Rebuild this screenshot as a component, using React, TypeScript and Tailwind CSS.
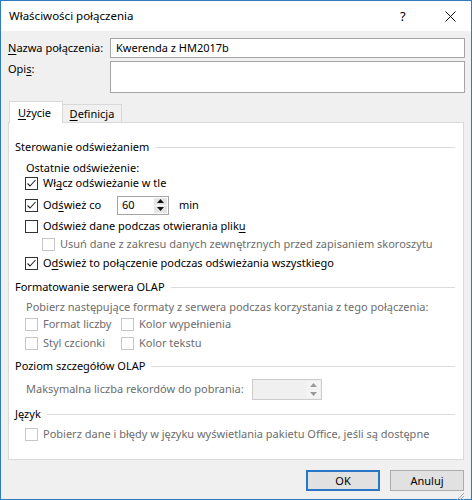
import type { ReactNode } from "react";

const U = ({ children }: { children: ReactNode }) => (
  <span className="underline underline-offset-2 decoration-1">{children}</span>
);

const Check = ({ checked = false, disabled = false }: { checked?: boolean; disabled?: boolean }) => (
  <span
    className={
      "flex h-[13px] w-[13px] shrink-0 items-center justify-center border bg-white " +
      (disabled ? "border-[#c6c6c6]" : "border-[#333]")
    }
  >
    {checked && (
      <svg width="11" height="11" viewBox="0 0 11 11">
        <polyline points="1.5,5.5 4,8 9.5,2" fill="none" stroke="#222" strokeWidth="1.1" />
      </svg>
    )}
  </span>
);

const Row = ({ mt, className = "", children }: { mt: string; className?: string; children: ReactNode }) => (
  <div className={"flex h-[14px] items-center whitespace-nowrap " + mt + " " + className}>{children}</div>
);

const Section = ({ mt, title }: { mt: string; title: string }) => (
  <Row mt={mt} className="ml-[6px] mr-[8px] gap-[6px]">
    <span>{title}</span>
    <span className="h-px flex-1 bg-[#dcdcdc]" />
  </Row>
);

const Arrows = ({ disabled = false }: { disabled?: boolean }) => (
  <span className="flex h-full w-[14px] flex-col gap-px py-px pr-px">
    <span className={"flex flex-1 items-center justify-center " + (disabled ? "bg-[#f4f4f4]" : "bg-[#e5e5e5]")}>
      <svg width="7" height="4" viewBox="0 0 7 4">
        <polygon points="0,4 7,4 3.5,0" fill={disabled ? "#9a9a9a" : "#111"} />
      </svg>
    </span>
    <span className={"flex flex-1 items-center justify-center " + (disabled ? "bg-[#f4f4f4]" : "bg-[#e5e5e5]")}>
      <svg width="7" height="4" viewBox="0 0 7 4">
        <polygon points="0,0 7,0 3.5,4" fill={disabled ? "#9a9a9a" : "#111"} />
      </svg>
    </span>
  </span>
);

export default function App() {
  return (
    <div className="flex h-[500px] w-[472px] flex-col whitespace-nowrap border border-[#2f7bbf] bg-[#f0f0f0] font-['Noto_Sans',sans-serif] text-[11px] leading-[16px] text-black">
      {/* title bar */}
      <div className="flex h-[30px] shrink-0 items-center bg-white pl-[8px] text-[11.5px]">
        <span className="flex-1">Właściwości połączenia</span>
        <span className="w-[14px] text-[13px]">?</span>
        <span className="ml-[30px] mr-[15px] flex w-[12px] justify-center">
          <svg width="11" height="11" viewBox="0 0 11 11">
            <path d="M0.5 0.5L10.5 10.5M10.5 0.5L0.5 10.5" stroke="#111" strokeWidth="1" />
          </svg>
        </span>
      </div>

      <div className="flex flex-1 flex-col pl-[7px] pr-[6px]">
        <div className="mt-[7px] flex h-[20px] items-center">
          <span className="w-[102px] shrink-0">
            <U>N</U>azwa połączenia:
          </span>
          <div className="flex h-full flex-1 items-center border border-[#a5a5a5] bg-white pl-[5px]">
            Kwerenda z HM2017b
          </div>
        </div>
        <div className="mt-[3px] flex h-[32px]">
          <span className="w-[102px] shrink-0">
            Opi<U>s</U>:
          </span>
          <div className="h-full flex-1 border border-[#a5a5a5] bg-white" />
        </div>

        {/* tabs */}
        <div className="mt-[8px] flex h-[21px] items-end pl-px">
          <div className="relative z-10 -mb-px flex h-[22px] w-[54px] items-center justify-center border border-b-0 border-[#d9d9d9] bg-white pr-[3px]">
            <span>
              <U>U</U>życie
            </span>
          </div>
          <div className="flex h-[18px] w-[59px] items-center justify-center border border-b-0 border-l-0 border-[#d9d9d9] bg-[#f0f0f0]">
            <span>
              <U>D</U>efinicja
            </span>
          </div>
        </div>

        <div className="mr-px h-[338px] border border-[#d9d9d9] bg-white pt-[17px]">
          <Section mt="" title="Sterowanie odświeżaniem" />
          <Row mt="mt-[7px]" className="ml-[17px]">
            Ostatnie odświeżenie:
          </Row>
          <Row mt="mt-[1px]" className="ml-[16px] gap-[5px]">
            <Check checked />
            <span>
              Wł<U>ą</U>cz odświeżanie w tle
            </span>
          </Row>
          <Row mt="mt-[8px]" className="ml-[16px] gap-[5px]">
            <Check checked />
            <span className="w-[69px]">
              Od<U>ś</U>wież co
            </span>
            <span className="flex h-[19px] w-[52px] shrink-0 items-center border border-[#a5a5a5] bg-white">
              <span className="flex-1 pl-[4px]">60</span>
              <Arrows />
            </span>
            <span className="ml-[5px]">min</span>
          </Row>
          <Row mt="mt-[7px]" className="ml-[16px] gap-[5px]">
            <Check />
            <span>
              Odśwież dane podczas otwierania plik<U>u</U>
            </span>
          </Row>
          <Row mt="mt-[4px]" className="ml-[33px] gap-[5px] text-[#6d6d6d]">
            <Check disabled />
            <span>Usuń dane z zakresu danych zewnętrznych przed zapisaniem skoroszytu</span>
          </Row>
          <Row mt="mt-[5px]" className="ml-[16px] gap-[5px]">
            <Check checked />
            <span>
              O<U>d</U>śwież to połączenie podczas odświeżania wszystkiego
            </span>
          </Row>

          <Section mt="mt-[10px]" title="Formatowanie serwera OLAP" />
          <Row mt="mt-[6px]" className="ml-[17px] text-[#6d6d6d]">
            Pobierz następujące formaty z serwera podczas korzystania z tego połączenia:
          </Row>
          <Row mt="mt-[3px]" className="ml-[16px] gap-[5px] text-[#6d6d6d]">
            <Check disabled />
            <span className="w-[73px]">Format liczby</span>
            <Check disabled />
            <span>Kolor wypełnienia</span>
          </Row>
          <Row mt="mt-[5px]" className="ml-[16px] gap-[5px] text-[#6d6d6d]">
            <Check disabled />
            <span className="w-[73px]">Styl czcionki</span>
            <Check disabled />
            <span>Kolor tekstu</span>
          </Row>

          <Section mt="mt-[9px]" title="Poziom szczegółów OLAP" />
          <Row mt="mt-[9px]" className="ml-[17px] text-[#6d6d6d]">
            <span className="w-[226px]">Maksymalna liczba rekordów do pobrania:</span>
            <span className="flex h-[21px] w-[70px] items-center border border-[#cccccc] bg-[#f0f0f0]">
              <span className="flex-1" />
              <Arrows disabled />
            </span>
          </Row>

          <Section mt="mt-[11px]" title="Język" />
          <Row mt="mt-[6px]" className="ml-[16px] gap-[5px] text-[#6d6d6d]">
            <Check disabled />
            <span>Pobierz dane i błędy w języku wyświetlania pakietu Office, jeśli są dostępne</span>
          </Row>
        </div>

        <div className="mt-[10px] flex justify-end gap-[10px] pr-px">
          <button className="h-[21px] w-[74px] border-2 border-[#2a76c6] bg-[#e1e1e1]">OK</button>
          <button className="h-[21px] w-[74px] border border-[#adadad] bg-[#e1e1e1]">Anuluj</button>
        </div>
        <div className="flex flex-1 items-end justify-end">
          <svg width="10" height="10" viewBox="0 0 10 10" className="mb-px">
            <path d="M9 2L2 9M9 5L5 9M9 8L8 9" stroke="#9aa8b8" strokeWidth="1" />
          </svg>
        </div>
      </div>
    </div>
  );
}
